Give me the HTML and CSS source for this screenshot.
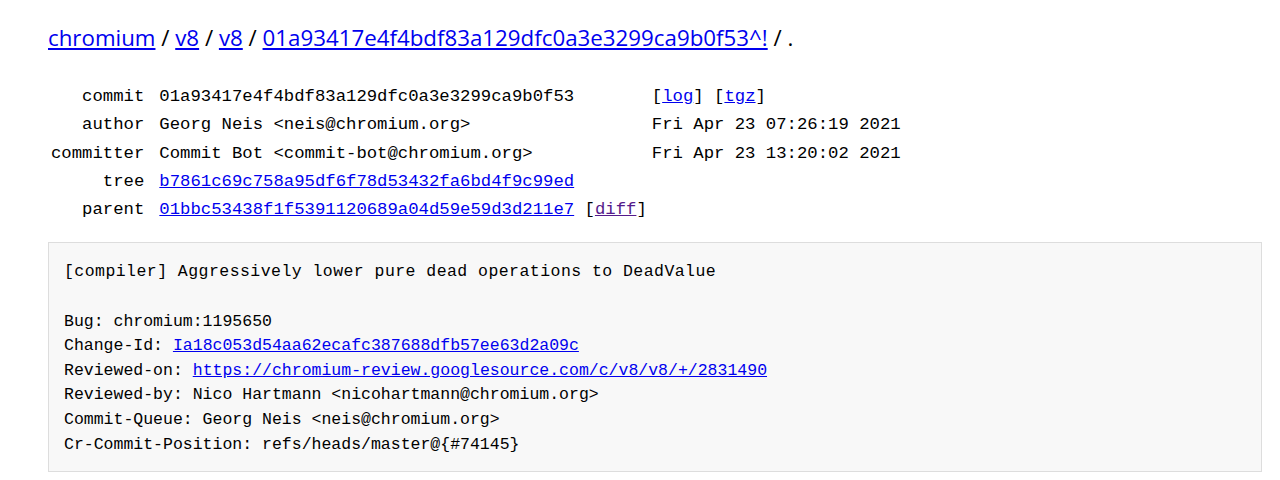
FILE: index.html
```html
<!DOCTYPE html>
<html>
<head>
<meta charset="utf-8">
<link rel="stylesheet" href="styles.css">
</head>
<body>
<div class="page">
  <h1 class="crumbs"><a href="#">chromium</a> / <a href="#">v8</a> / <a href="#">v8</a> / <a href="#">01a93417e4f4bdf83a129dfc0a3e3299ca9b0f53^!</a> / .</h1>
  <div class="meta">
    <div class="label">commit</div><div class="val">01a93417e4f4bdf83a129dfc0a3e3299ca9b0f53</div><div class="extra">[<a href="#">log</a>] [<a href="#">tgz</a>]</div>
    <div class="label">author</div><div class="val">Georg Neis &lt;neis@chromium.org&gt;</div><div class="extra">Fri Apr 23 07:26:19 2021</div>
    <div class="label">committer</div><div class="val">Commit Bot &lt;commit-bot@chromium.org&gt;</div><div class="extra">Fri Apr 23 13:20:02 2021</div>
    <div class="label">tree</div><div class="val"><a href="#">b7861c69c758a95df6f78d53432fa6bd4f9c99ed</a></div><div class="extra"></div>
    <div class="label">parent</div><div class="val"><a href="#">01bbc53438f1f5391120689a04d59e59d3d211e7</a> [<a href="#" class="visited">diff</a>]</div><div class="extra"></div>
  </div>
  <pre class="message"><span class="subject">[compiler] Aggressively lower pure dead operations to DeadValue</span>

Bug: chromium:1195650
Change-Id: <a href="#">Ia18c053d54aa62ecafc387688dfb57ee63d2a09c</a>
Reviewed-on: <a href="#">https://chromium-review.googlesource.com/c/v8/v8/+/2831490</a>
Reviewed-by: Nico Hartmann &lt;nicohartmann@chromium.org&gt;
Commit-Queue: Georg Neis &lt;neis@chromium.org&gt;
Cr-Commit-Position: refs/heads/master@{#74145}</pre>
</div>
</body>
</html>
```
FILE: styles.css
```css
html, body {
  margin: 0;
  padding: 0;
  background: #fff;
  color: #000;
}
.page {
  padding: 22px 18px 0 48px;
}
a {
  color: #0000ee;
  text-decoration: underline;
}
a.visited {
  color: #551a8b;
}
.crumbs {
  margin: 0;
  font-family: "Open Sans", sans-serif;
  font-weight: normal;
  font-size: 22.3px;
  line-height: 32px;
}
.meta {
  display: grid;
  grid-template-columns: auto auto 1fr;
  margin-top: 29px;
  font-family: "Liberation Mono", monospace;
  font-size: 17.3px;
  line-height: 28.3px;
  white-space: pre;
}
.label {
  text-align: right;
  padding: 0 15px 0 3px;
}
.extra {
  padding-left: 5px;
}
.message {
  margin: 18px 0 0 0;
  padding: 17px 15px 14px 15px;
  background: #f8f8f8;
  border: 1px solid #dddddd;
  font-family: "Liberation Mono", monospace;
  font-size: 16.5px;
  line-height: 24.6px;
}
.subject {
  letter-spacing: 0.45px;
}
```
